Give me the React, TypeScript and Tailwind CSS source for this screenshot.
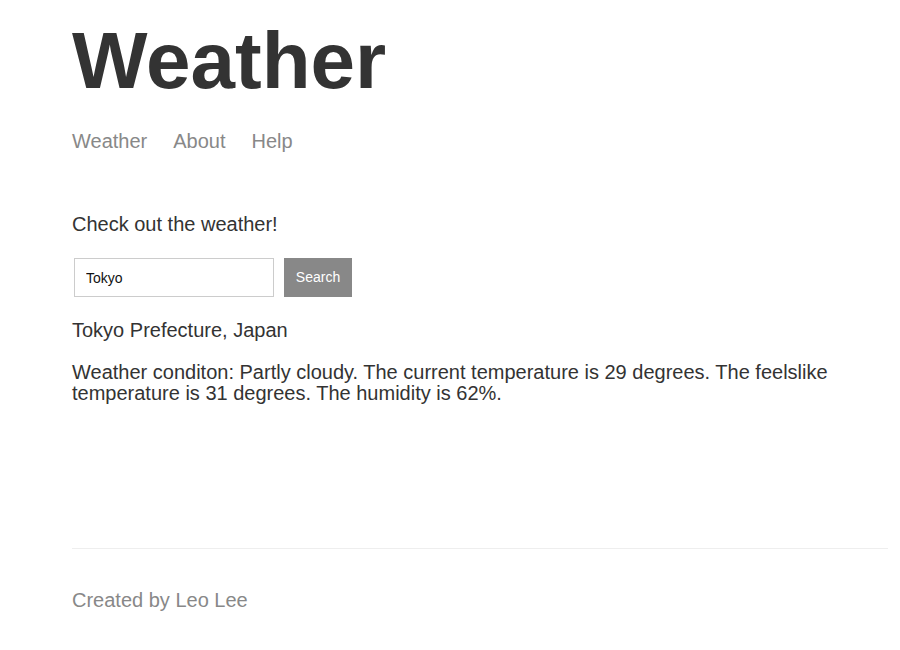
import { useState } from 'react';

export default function App() {
  const [location, setLocation] = useState('Tokyo');

  return (
    <div className="min-h-[650px] bg-white pl-[72px] pr-[12px] pt-[21px] font-['Liberation_Sans',Arial,sans-serif]">
      <header>
        <h1 className="text-[80px] font-bold leading-none text-[#333]">Weather</h1>
        <nav className="mt-[28px] flex gap-[26px] text-[20px] leading-6 text-[#888]">
          <a href="#">Weather</a>
          <a href="#">About</a>
          <a href="#">Help</a>
        </nav>
      </header>

      <main className="text-[#333]">
        <p className="mt-[59px] text-[20px] leading-6">Check out the weather!</p>
        <form
          className="mt-[22px] flex items-stretch gap-[10px] pl-[2px]"
          onSubmit={(e) => e.preventDefault()}
        >
          <input
            className="h-[39px] w-[200px] border border-[#ccc] px-[11px] text-[14px] text-[#111] outline-none"
            value={location}
            onChange={(e) => setLocation(e.target.value)}
          />
          <button className="h-[39px] w-[68px] bg-[#888] text-[14px] text-white">Search</button>
        </form>
        <p className="mt-[21px] text-[20px] leading-6">Tokyo Prefecture, Japan</p>
        <p className="mt-[20px] text-[20px] leading-[21px]">
          Weather conditon: Partly cloudy. The current temperature is 29 degrees. The feelslike
          temperature is 31 degrees. The humidity is 62%.
        </p>
      </main>

      <footer className="mt-[144px] border-t border-[#eee] pt-[39px]">
        <p className="text-[20px] leading-6 text-[#888]">Created by Leo Lee</p>
      </footer>
    </div>
  );
}
